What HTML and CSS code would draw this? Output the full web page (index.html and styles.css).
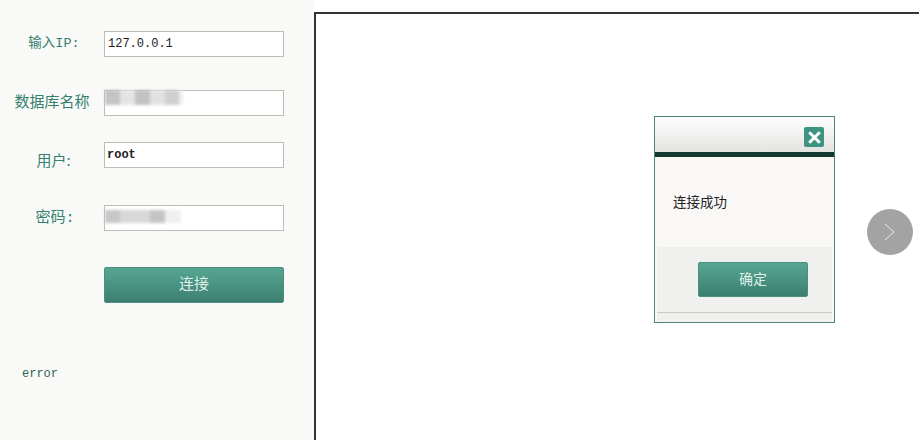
FILE: index.html
```html
<!DOCTYPE html>
<html lang="zh-CN">
<head>
    <meta charset="UTF-8">
    <title>连接数据库</title>
    <link rel="stylesheet" href="styles.css">
</head>
<body>
    <div class="page">
        <!-- connection form -->
        <div class="sidebar">
            <div class="row row-ip">
                <label class="row-label label-ip">输入IP:</label>
                <div class="field"><input type="text" class="ip-input" value="127.0.0.1"></div>
            </div>
            <div class="row row-db">
                <label class="row-label label-db">数据库名称</label>
                <div class="field">
                    <input type="text">
                    <div class="smudge smudge-db"></div>
                </div>
            </div>
            <div class="row row-user">
                <label class="row-label label-user">用户:</label>
                <div class="field"><input type="text" class="user-input" value="root"></div>
            </div>
            <div class="row row-pass">
                <label class="row-label label-pass">密码:</label>
                <div class="field">
                    <input type="text">
                    <div class="smudge smudge-pass"></div>
                </div>
            </div>
            <button class="btn btn-connect">连接</button>
            <p class="error">error</p>
        </div>

        <div class="content"></div>

        <!-- success dialog -->
        <div class="dialog">
            <div class="dialog-head">
                <span class="dialog-close">
                    <svg width="17" height="17" viewBox="0 0 17 17"><path d="M3.2 3.2 L13.8 13.8 M13.8 3.2 L3.2 13.8" stroke="#fff" stroke-width="3" fill="none"/></svg>
                </span>
            </div>
            <div class="dialog-bar"></div>
            <div class="dialog-body">连接成功</div>
            <div class="dialog-foot">
                <button class="btn btn-ok">确定</button>
                <div class="dialog-line"></div>
            </div>
        </div>

        <div class="next-btn">
            <svg width="14" height="18" viewBox="0 0 14 18"><path d="M2 1 L11 9 L2 17" stroke="#fff" stroke-width="0.8" fill="none"/></svg>
        </div>
    </div>
</body>
</html>
```

FILE: styles.css
```css
html, body {
    margin: 0;
    padding: 0;
    height: 100%;
    overflow: hidden;
    background-color: #fff;
}

.page {
    display: flex;
    height: 440px;
    position: relative;
    font-family: "Noto Sans CJK SC", "Liberation Sans", sans-serif;
}

.sidebar {
    width: 314px;
    flex-shrink: 0;
    background-color: #f9f9f7;
    padding-top: 31px;
    box-sizing: border-box;
}

.row {
    display: flex;
    height: 26px;
}

.row-db { margin-top: 33px; }
.row-user { margin-top: 26px; }
.row-pass { margin-top: 37px; }

.row-label {
    width: 104px;
    text-align: center;
    font-size: 15px;
    line-height: 22px;
    color: #35806f;
    white-space: nowrap;
}

.label-ip {
    font-family: "Liberation Mono", "Noto Sans CJK SC", monospace;
    font-size: 13.5px;
    margin-top: 2px;
    padding-left: 4px;
    width: 100px;
}

.label-user { margin-top: 7px; padding-left: 3px; width: 101px; }

.label-pass {
    font-family: "Liberation Mono", "Noto Sans CJK SC", monospace;
    margin-top: 3px;
    padding-left: 6px;
    width: 98px;
}

.field {
    position: relative;
    width: 180px;
}

input {
    display: block;
    width: 180px;
    height: 26px;
    box-sizing: border-box;
    border: 1px solid #bdbdb6;
    background: #fff;
    padding: 0 3px;
    font-family: "Liberation Mono", monospace;
    font-size: 12px;
    color: #222;
}

.ip-input { padding-bottom: 1px; }
.user-input { font-weight: bold; padding: 0 2px 1px; }

.smudge {
    position: absolute;
    filter: blur(1.5px);
}

.smudge-db {
    left: 1px;
    top: 0;
    width: 78px;
    height: 15px;
    background: linear-gradient(90deg, #c4c4c4 0 15px, #e4e4e4 15px 30px, #c2c2c2 30px 45px, #e2e2e2 45px 60px, #d0d0d0 60px 74px, #eee 74px);
}

.smudge-pass {
    left: 1px;
    top: 5px;
    width: 76px;
    height: 13px;
    background: linear-gradient(90deg, #c6c6c6 0 15px, #d8d8d8 15px 45px, #c4c4c4 45px 60px, #f0f0f0 60px 76px);
}

.btn {
    display: block;
    border: 1px solid #4a8f7f;
    border-radius: 2px;
    background: linear-gradient(#57a692, #3c7f70);
    color: #dff0ea;
    font-family: "Noto Sans CJK SC", sans-serif;
    padding: 0;
}

.btn-connect {
    width: 180px;
    height: 36px;
    margin: 36px 0 0 104px;
    padding-bottom: 5px;
    font-size: 15px;
}

.error {
    margin: 64px 0 0 22px;
    font-family: "Liberation Mono", monospace;
    font-size: 12px;
    line-height: 14px;
    color: #2a6557;
}

.content {
    flex: 1;
    margin-top: 12px;
    background-color: #fff;
    border-top: 2px solid #333;
    border-left: 2px solid #333;
}

.dialog {
    position: absolute;
    left: 654px;
    top: 116px;
    width: 181px;
    height: 207px;
    box-sizing: border-box;
    border: 1px solid #4d8677;
    background-color: #f9f8f6;
    display: flex;
    flex-direction: column;
}

.dialog-head {
    height: 35px;
    flex-shrink: 0;
    background: linear-gradient(#ffffff, #e3e3e1);
    display: flex;
    justify-content: flex-end;
    padding: 10px 10px 0 0;
    box-sizing: border-box;
}

.dialog-close {
    width: 20px;
    height: 20px;
    border-radius: 2px;
    background-color: #3d9482;
    display: flex;
    align-items: center;
    justify-content: center;
}

.dialog-bar {
    height: 5px;
    flex-shrink: 0;
    background-color: #10392f;
}

.dialog-body {
    height: 90px;
    flex-shrink: 0;
    box-sizing: border-box;
    padding: 34px 0 0 18px;
    font-size: 13.5px;
    line-height: 20px;
    color: #222;
}

.dialog-foot {
    flex: 1;
    background-color: #f0f0ef;
    margin: 0 2px;
    padding-top: 15px;
    position: relative;
}

.btn-ok {
    width: 110px;
    height: 35px;
    margin-left: 41px;
    padding-bottom: 4px;
    font-size: 14px;
}

.dialog-line {
    margin-top: 15px;
    border-top: 1px solid #c9c9c7;
}

.next-btn {
    position: absolute;
    left: 867px;
    top: 209px;
    width: 46px;
    height: 46px;
    border-radius: 50%;
    background-color: #a3a3a3;
    display: flex;
    align-items: center;
    justify-content: center;
}
```
